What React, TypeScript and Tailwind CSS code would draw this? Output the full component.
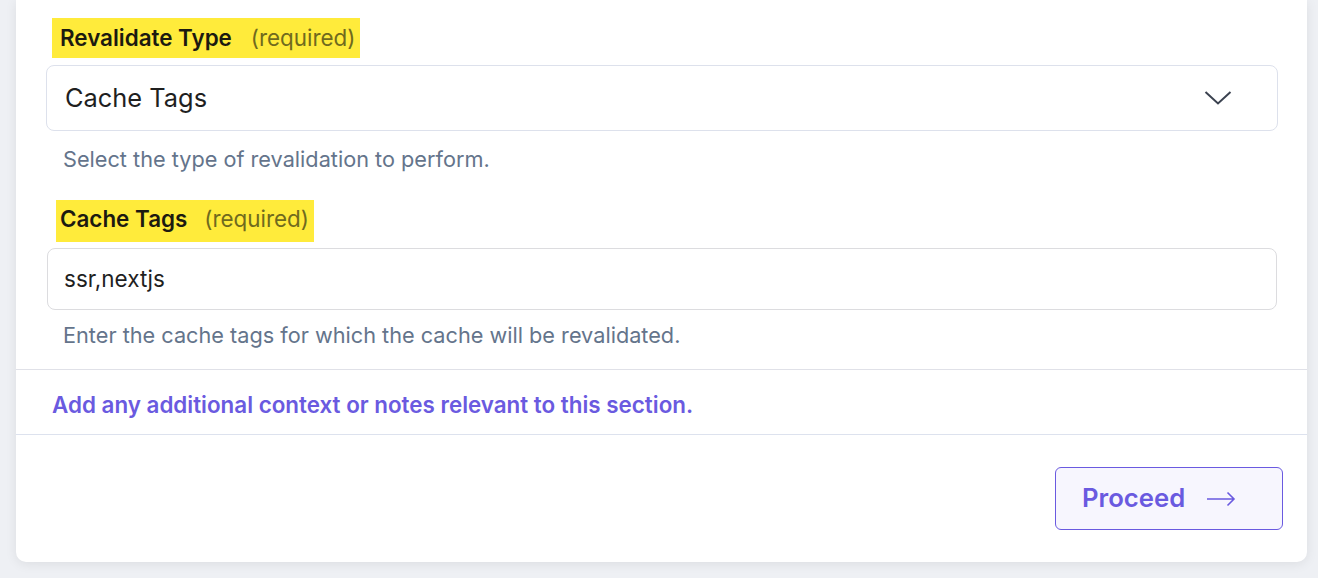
import React from "react";

export default function App() {
  const font = { fontFamily: "Inter, 'Noto Sans', sans-serif" };
  return (
    <div className="w-[1318px] h-[578px] bg-[#eef0f4] overflow-hidden" style={font}>
      <div className="ml-[16px] w-[1291px] h-[562px] bg-white rounded-b-[10px] shadow-[0_2px_12px_rgba(0,0,0,0.08)] flex flex-col">
        <div className="pl-[30px] pr-[29px] pt-[18px]">
          <div className="ml-[6px] inline-flex items-center h-[40px] bg-[#ffeb3b] pl-[8px] pr-[5px] text-[22.4px]">
            <span className="font-semibold text-[#1c1a10]">Revalidate Type</span>
            <span className="ml-[19px] text-[#706a1e]">(required)</span>
          </div>
          <div className="mt-[7px] h-[66px] border border-[#dde1ec] rounded-[8px] flex items-center justify-between pl-[18px] pr-[45px]">
            <span className="text-[25.4px] text-[#1f1f1f]">Cache Tags</span>
            <svg width="28" height="16" viewBox="0 0 28 16" fill="none">
              <path d="M1.5 2 L14 13.5 L26.5 2" stroke="#3b4250" strokeWidth="2" />
            </svg>
          </div>
          <div className="mt-[14px] pl-[17px] text-[21.7px] leading-[28px] text-[#64748b]">
            Select the type of revalidation to perform.
          </div>
          <div className="mt-[27px] ml-[10px] inline-flex items-center h-[42px] bg-[#ffeb3b] pl-[4px] pr-[5px] pb-[5px] text-[22.4px]">
            <span className="font-semibold text-[#1c1a10]">Cache Tags</span>
            <span className="ml-[17px] text-[#706a1e]">(required)</span>
          </div>
          <div className="mt-[6px] ml-[1px] mr-[1px] h-[62px] border border-[#dcdcdf] rounded-[8px] flex items-center pl-[16px]">
            <span className="text-[22.5px] text-[#1f1f1f]">ssr,nextjs</span>
          </div>
          <div className="mt-[11px] pl-[17px] text-[21.7px] leading-[28px] text-[#64748b]">
            Enter the cache tags for which the cache will be revalidated.
          </div>
        </div>
        <div className="mt-[20px] border-t border-[#e0e1e8] h-[65px] flex items-center pl-[36px] pt-[6px]">
          <span className="text-[22.4px] font-semibold text-[#6a5ae0]">
            Add any additional context or notes relevant to this section.
          </span>
        </div>
        <div className="border-t border-[#dde2ee] flex justify-end pr-[24px] pt-[32px]">
          <button className="w-[228px] h-[63px] border border-[#6a5ae0] bg-[#f7f6fe] rounded-[6px] flex items-center pl-[26px]">
            <span className="text-[25.7px] font-semibold text-[#6a5ae0]">Proceed</span>
            <svg className="ml-[21px]" width="30" height="16" viewBox="0 0 30 16" fill="none">
              <path d="M1 8 H28 M21.5 1.5 L28 8 L21.5 14.5" stroke="#6a5ae0" strokeWidth="1.6" />
            </svg>
          </button>
        </div>
      </div>
    </div>
  );
}
